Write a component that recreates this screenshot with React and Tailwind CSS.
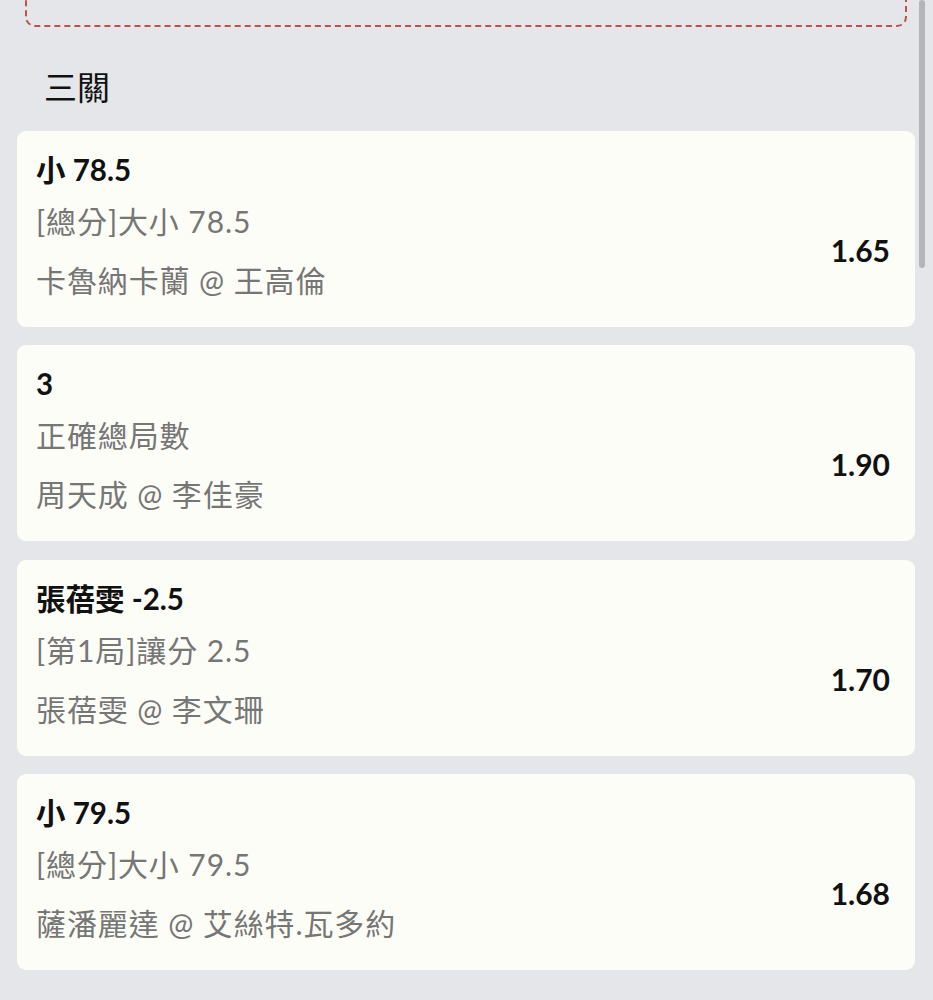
import React from 'react';

const bets = [
  { pick: '小 78.5', market: '[總分]大小 78.5', match: '卡魯納卡蘭 @ 王高倫', odds: '1.65' },
  { pick: '3', market: '正確總局數', match: '周天成 @ 李佳豪', odds: '1.90' },
  { pick: '張蓓雯 -2.5', market: '[第1局]讓分 2.5', match: '張蓓雯 @ 李文珊', odds: '1.70' },
  { pick: '小 79.5', market: '[總分]大小 79.5', match: '薩潘麗達 @ 艾絲特.瓦多約', odds: '1.68' },
];

function BetCard({ bet }) {
  return (
    <div className="h-[196px] rounded-[9px] bg-[#fdfdf7] pl-[19px] pr-[25px] pt-[21px]">
      <div className="h-[36px] text-[29.5px] leading-[36px] font-bold text-[#111111]">{bet.pick}</div>
      <div className="mt-[15px] flex items-center justify-between">
        <div className="text-[30px] tracking-[0.9px] text-[#767676]">
          <div className="h-[36px] leading-[36px]">{bet.market}</div>
          <div className="mt-[23px] h-[36px] leading-[36px]">{bet.match}</div>
        </div>
        <div className="text-[30px] font-bold text-[#111111]">{bet.odds}</div>
      </div>
    </div>
  );
}

export default function App() {
  return (
    <div
      className="relative min-h-[1000px] overflow-hidden bg-[#e5e6e9]"
      style={{ fontFamily: 'Lato, "Noto Sans CJK TC", sans-serif' }}
    >
      {/* scrollbar thumb */}
      <div className="absolute right-[8px] top-0 h-[268px] w-[6px] rounded-full bg-[#b4b5b8]" />

      <div className="w-[898px] ml-[17px]">
        {/* dashed box cut at top */}
        <div className="-mt-[40px] mx-[8px] h-[67px] rounded-[10px] border-2 border-dashed border-[#c0504d]" />

        <div className="mt-[40px] pl-[27px] h-[40px] text-[33px] leading-[40px] text-[#111111]">三關</div>

        <div className="mt-[24px] flex flex-col gap-[18.3px]">
          {bets.map((bet) => (
            <BetCard key={bet.odds} bet={bet} />
          ))}
        </div>
      </div>
    </div>
  );
}
